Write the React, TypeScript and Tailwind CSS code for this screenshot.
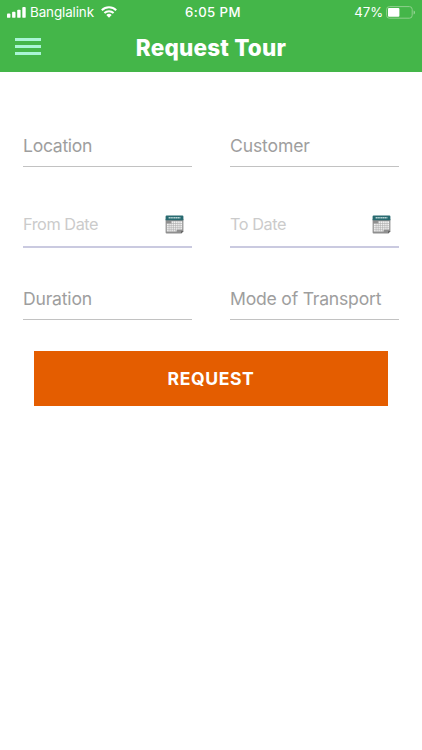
import React from "react";

interface FieldProps {
  label: string;
  className?: string;
  textClassName?: string;
}

const SignalIcon = () => (
  <svg width="19" height="11" viewBox="0 0 19 11" fill="white">
    <rect x="0" y="6.5" width="3.4" height="4.3" rx="0.9" />
    <rect x="5.1" y="4.8" width="3.4" height="6" rx="0.9" />
    <rect x="10.2" y="2.7" width="3.4" height="8.1" rx="0.9" />
    <rect x="15.3" y="0" width="3.4" height="10.8" rx="0.9" />
  </svg>
);

const WifiIcon = () => (
  <svg width="16" height="12" viewBox="0 0 16 12" fill="none" stroke="white" strokeWidth="2">
    <path d="M0.8 4.3a10.3 10.3 0 0 1 14.4 0" />
    <path d="M3.4 7a6.6 6.6 0 0 1 9.2 0" />
    <path d="M8 11.7L5.3 9a3.9 3.9 0 0 1 5.4 0z" fill="white" stroke="none" />
  </svg>
);

const BatteryIcon = () => (
  <svg width="30" height="13" viewBox="0 0 30 13" fill="none">
    <rect x="0.6" y="0.6" width="25.6" height="11.6" rx="2.8" stroke="#8fd08d" strokeWidth="1" />
    <rect x="2" y="2" width="11.4" height="8.8" rx="1" fill="white" />
    <path d="M27.7 4.4v4c1.6-.7 1.6-3.3 0-4z" fill="#a9dba7" />
  </svg>
);

const CalendarIcon = () => (
  <svg width="19" height="19" viewBox="0 0 19 19">
    <path d="M0.6 4h17.8v12.3l-2.2 2.2H1.6a1 1 0 0 1-1-1z" fill="#8f8f8f" />
    <path d="M1.6 0.4h15.8a1 1 0 0 1 1 1v3.8H0.6V1.4a1 1 0 0 1 1-1z" fill="#286a70" />
    <path d="M3.6 2.8h11.8" stroke="#b5d2d3" strokeWidth="1.4" strokeDasharray="1.5 0.3" />
    <path d="M6.4 6.2h10.8v8.4h-5.6v2H1.8V8.4h4.6z" fill="#f2f2f2" />
    <path
      d="M2 8.5h15M2 10.6h15M2 12.7h15M2 14.7h9M4.1 8.4v8.2M6.2 6.2v10.4M8.4 6.2v10.4M10.6 6.2v10.4M12.8 6.2v8.4M15 6.2v8.4"
      stroke="#a6a6a6"
      strokeWidth="0.55"
    />
    <path d="M18.4 16.3l-2.2 2.2v-2.2z" fill="#555555" />
  </svg>
);

const TextField: React.FC<FieldProps> = ({ label, textClassName }) => (
  <div className="flex items-center border-b border-[#c2c2c2] pb-2">
    <span className={`text-[17.6px] leading-6 text-[#9e9e9e] whitespace-nowrap ${textClassName ?? ""}`}>{label}</span>
  </div>
);

const DateField: React.FC<FieldProps> = ({ label, textClassName }) => (
  <button className="flex h-[37px] items-start justify-between border-b-2 border-[#cacae0] pr-2 text-left">
    <span className={`pt-px text-[16.3px] leading-6 text-[#cbcbcb] ${textClassName ?? ""}`}>{label}</span>
    <span className="pt-[4px]">
      <CalendarIcon />
    </span>
  </button>
);

const App: React.FC = () => {
  return (
    <div className="min-h-screen bg-white font-['Inter',sans-serif]">
      <header className="h-[72px] bg-[#44b649] text-white">
        {/* Status bar */}
        <div className="grid h-6 grid-cols-3 items-center pl-[7px] pr-[6px] text-[13px] leading-6">
          <div className="flex items-center">
            <SignalIcon />
            <span className="ml-[4px] text-[13.4px] tracking-[-0.1px]">Banglalink</span>
            <span className="ml-[7px]">
              <WifiIcon />
            </span>
          </div>
          <span className="pl-[3px] text-center text-[13.2px] font-medium tracking-[0.4px]">6:05 PM</span>
          <div className="flex items-center justify-end gap-[3px]">
            <span className="text-[13.2px] tracking-[-0.1px]">47%</span>
            <BatteryIcon />
          </div>
        </div>

        <div className="grid h-[46px] grid-cols-[28px_1fr_28px] items-center px-[15px]">
          <button aria-label="Menu" className="flex flex-col gap-1 pb-[2px]">
            <span className="h-[3px] w-[26px] bg-[#a9f5d5]" />
            <span className="h-[3px] w-[26px] bg-[#a9f5d5]" />
            <span className="h-[3px] w-[26px] bg-[#a9f5d5]" />
          </button>
          <h1 className="pt-px text-center text-[22.5px] leading-[45px] font-extrabold tracking-[0.2px]">Request Tour</h1>
        </div>
      </header>

      <main>
        <div className="grid grid-cols-2 gap-x-[38px] px-[23px] pt-[62px]">
          <TextField label="Location" textClassName="tracking-[-0.3px]" />
          <TextField label="Customer" textClassName="tracking-[-0.15px]" />
        </div>
        <div className="grid grid-cols-2 gap-x-[38px] px-[23px] pt-[44px]">
          <DateField label="From Date" textClassName="tracking-[-0.45px]" />
          <DateField label="To Date" textClassName="tracking-[-0.45px]" />
        </div>
        <div className="grid grid-cols-2 gap-x-[38px] px-[23px] pt-[39px]">
          <TextField label="Duration" textClassName="tracking-[-0.2px]" />
          <TextField label="Mode of Transport" textClassName="tracking-[-0.22px]" />
        </div>
        <div className="px-[34px] pt-[31px]">
          <button className="h-[55px] w-full bg-[#e45d00] pt-px text-[17.6px] font-bold tracking-[0.6px] text-white">
            REQUEST
          </button>
        </div>
      </main>
    </div>
  );
};

export default App;
